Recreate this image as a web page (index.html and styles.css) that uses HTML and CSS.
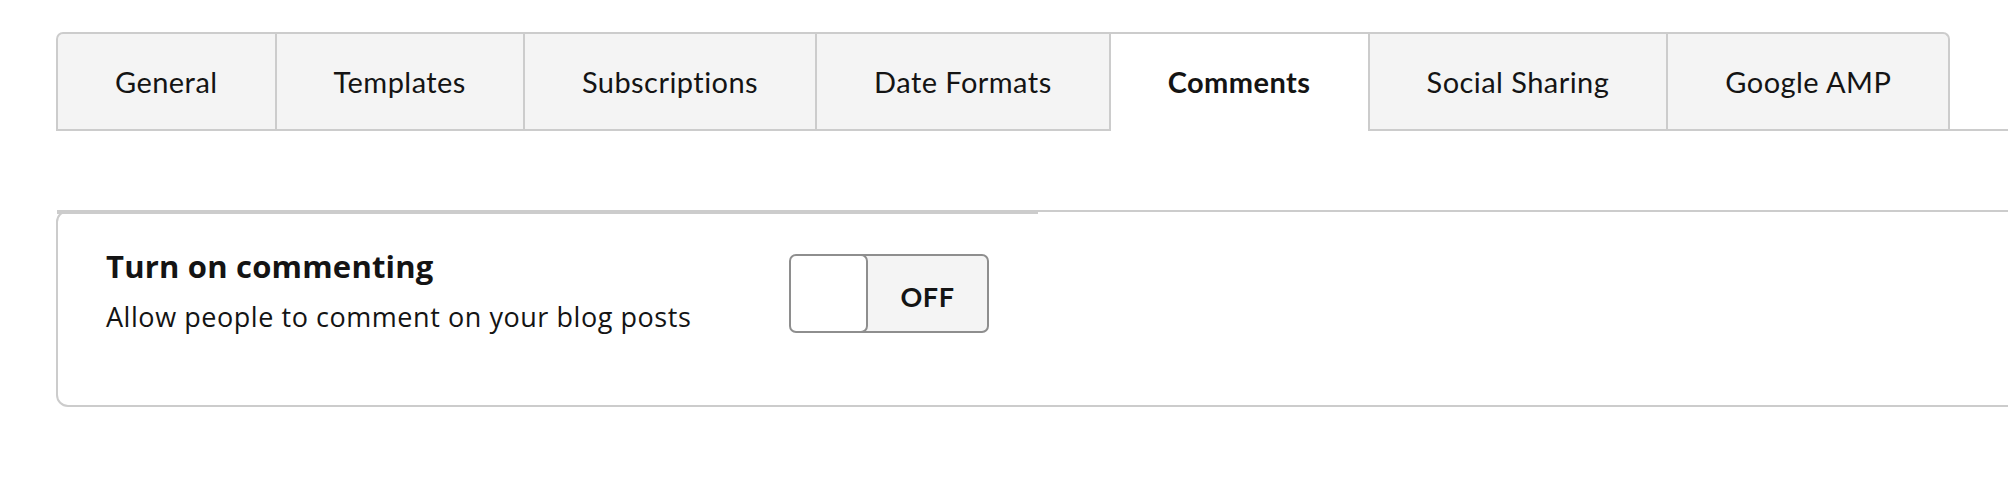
FILE: index.html
```html
<!DOCTYPE html>
<html>
  <head>
    <title>Blog Settings</title>
    <link rel="stylesheet" href="styles.css">
  </head>
  <body>
    <div class="page">
      <ul class="tabs">
        <li class="tab">General</li>
        <li class="tab">Templates</li>
        <li class="tab">Subscriptions</li>
        <li class="tab">Date Formats</li>
        <li class="tab active">Comments</li>
        <li class="tab">Social Sharing</li>
        <li class="tab">Google AMP</li>
      </ul>

      <div class="setting-card">
        <div class="setting-text">
          <h3>Turn on commenting</h3>
          <p>Allow people to comment on your blog posts</p>
        </div>
        <button class="toggle" type="button">
          <span class="toggle-knob"></span>
          <span class="toggle-label">OFF</span>
        </button>
      </div>
    </div>
  </body>
</html>
```

FILE: styles.css
```css
html,
body {
  margin: 0;
  overflow: hidden;
}

body {
  font-family: Lato, "Noto Sans", sans-serif;
  color: #141414;
  background: #fff;
  padding: 32px 0 0 56px;
}

.page {
  width: 2100px;
}

.tabs {
  list-style: none;
  margin: 0;
  padding: 0;
  display: flex;
  border-bottom: 2px solid #ccc;
}

.tab {
  padding: 0 57px;
  height: 95px;
  line-height: 95px;
  font-size: 29px;
  letter-spacing: 0.45px;
  background: #f4f4f4;
  border-top: 2px solid #ccc;
  border-right: 2px solid #ccc;
  white-space: nowrap;
}

.tab:first-child {
  border-left: 2px solid #ccc;
  border-top-left-radius: 7px;
}

.tab:last-child {
  border-top-right-radius: 7px;
}

.tab.active {
  background: #fff;
  font-weight: 700;
  height: 97px;
  margin-bottom: -2px;
}

.setting-card {
  position: relative;
  display: flex;
  align-items: flex-start;
  margin-top: 79px;
  padding: 35px 48px 70px;
  border: 2px solid #ccc;
  border-radius: 12px;
}

.setting-card::before {
  content: "";
  position: absolute;
  top: -2px;
  left: -1px;
  width: 981px;
  height: 4px;
  background: #ccc;
}

.setting-text {
  width: 683px;
  font-family: "Open Sans", Lato, sans-serif;
}

.setting-text h3 {
  margin: 0;
  font-size: 31px;
  line-height: 38px;
  font-weight: 700;
  letter-spacing: 0.2px;
}

.setting-text p {
  margin: 14px 0 0;
  font-size: 27px;
  line-height: 36px;
  letter-spacing: 0.55px;
}

.toggle {
  display: flex;
  margin-top: 7px;
  padding: 0;
  width: 200px;
  height: 79px;
  border: 2px solid #8e8e8e;
  border-radius: 7px;
  background: #f4f4f4;
  font-family: inherit;
  cursor: pointer;
  overflow: hidden;
}

.toggle-knob {
  width: 75px;
  height: 75px;
  margin: -2px 0 0 -2px;
  border: 2px solid #8e8e8e;
  border-radius: 7px;
  background: #fff;
  flex-shrink: 0;
}

.toggle-label {
  flex: 1;
  line-height: 81px;
  font-size: 27px;
  font-weight: 700;
  letter-spacing: 0.5px;
  color: #141414;
  text-align: center;
}
```
